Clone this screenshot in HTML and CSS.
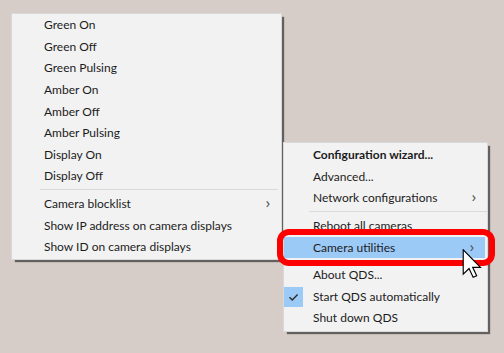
FILE: index.html
```html
<!DOCTYPE html>
<html lang="en">
<head>
<meta charset="utf-8">
<title>QDS menu</title>
<link rel="stylesheet" href="styles.css">
</head>
<body>
<div class="desk">
  <div class="menu menu-left">
    <div class="item">Green On</div>
    <div class="item">Green Off</div>
    <div class="item">Green Pulsing</div>
    <div class="item">Amber On</div>
    <div class="item">Amber Off</div>
    <div class="item">Amber Pulsing</div>
    <div class="item">Display On</div>
    <div class="item">Display Off</div>
    <div class="sep"></div>
    <div class="item">Camera blocklist<span class="chev">&#x203A;</span></div>
    <div class="item">Show IP address on camera displays</div>
    <div class="item">Show ID on camera displays</div>
  </div>

  <div class="menu menu-right">
    <div class="item bold">Configuration wizard...</div>
    <div class="item">Advanced...</div>
    <div class="item">Network configurations<span class="chev">&#x203A;</span></div>
    <div class="sep"></div>
    <div class="item">Reboot all cameras</div>
    <div class="item hot">Camera utilities<span class="chev">&#x203A;</span></div>
    <div class="sep"></div>
    <div class="item">About QDS...</div>
    <div class="item checked"><span class="check"><svg width="19" height="20" viewBox="0 0 19 20"><path d="M5.5 10.2 L8.3 13 L13.6 7.4" fill="none" stroke="#2b2b2b" stroke-width="1.4"/></svg></span>Start QDS automatically</div>
    <div class="item">Shut down QDS</div>
  </div>

  <div class="ring"></div>

  <svg class="cursor" width="20" height="29" viewBox="0 0 12.5 19">
    <path d="M0.5 0.5 L0.5 16.5 L4.3 12.8 L7 18.5 L9.3 17.5 L6.7 12 L11.8 12 Z" fill="#fff" stroke="#000" stroke-width="0.75" stroke-linejoin="miter"/>
  </svg>
</div>
</body>
</html>
```
FILE: styles.css
```css
html, body {
  margin: 0;
  padding: 0;
}
body {
  width: 504px;
  height: 353px;
  overflow: hidden;
  background: #d6cdc8;
  font-family: Lato, "Noto Sans", sans-serif;
  font-size: 12px;
  color: #1c1c1c;
}
.desk {
  position: relative;
  width: 504px;
  height: 353px;
}
.menu {
  position: absolute;
  box-sizing: border-box;
  background: #f2f2f2;
  border: 1px solid #d9d9d9;
  box-shadow: 3px 3px 1px -1px rgba(60, 60, 60, 0.75);
  display: flex;
  flex-direction: column;
}
.menu-left {
  left: 11px;
  top: 13px;
  width: 271px;
  height: 247px;
  padding: 0.2px 0 0 0;
}
.menu-right {
  left: 283px;
  top: 142px;
  width: 205px;
  height: 190px;
  padding: 1.2px 0 0 0;
}
.item {
  position: relative;
  height: 21.6px;
  line-height: 21.6px;
  white-space: nowrap;
  padding-left: 32px;
}
.menu-right .item {
  padding-left: 29px;
}
.bold {
  font-weight: bold;
}
.sep {
  height: 6px;
  display: flex;
  align-items: center;
  padding: 0 3px 0 28px;
}
.menu-right .sep {
  padding: 0 0 0 25px;
}
.sep::after {
  content: "";
  flex: 1;
  height: 1px;
  background: #dadada;
}
.chev {
  position: absolute;
  right: 11px;
  top: -1px;
  font-family: "Noto Sans", sans-serif;
  font-size: 14px;
  color: #555;
}
.hot {
  background: #9ccaf7;
  margin-right: 2px;
}
.check {
  position: absolute;
  left: 0;
  top: 1px;
  width: 19px;
  height: 20px;
  background: #9ccaf7;
}
.check svg {
  display: block;
}
.ring {
  position: absolute;
  left: 277px;
  top: 229px;
  width: 218px;
  height: 37px;
  box-sizing: border-box;
  border: 6.5px solid #ff0000;
  border-radius: 12px;
}
.cursor {
  position: absolute;
  left: 462px;
  top: 249px;
}
```
